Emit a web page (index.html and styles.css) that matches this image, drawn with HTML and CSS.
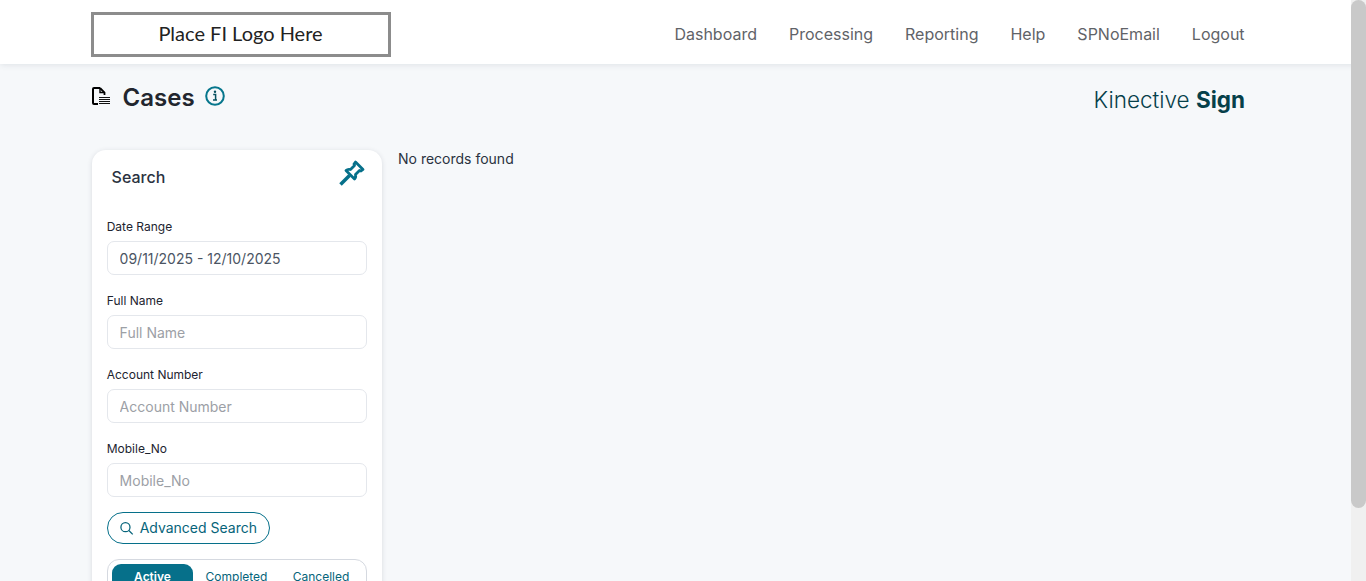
FILE: index.html
```html
<!DOCTYPE html>
<html lang="en">
<head>
<meta charset="utf-8">
<title>Cases</title>
<link rel="stylesheet" href="styles.css">
</head>
<body>
<div class="scrollbar"><div class="scrollbar-thumb"></div></div>
<header class="topbar">
  <div class="logo">Place FI Logo Here</div>
  <nav class="nav">
    <a>Dashboard</a>
    <a>Processing</a>
    <a>Reporting</a>
    <a>Help</a>
    <a>SPNoEmail</a>
    <a>Logout</a>
  </nav>
</header>
<main class="page">
  <div class="title-row">
    <div class="title-left">
      <svg class="doc-icon" width="19" height="19" viewBox="0 0 19 19" fill="none">
        <path d="M9 1H3C2.400 1 2 1.400 2 2V16C2 16.600 2.400 17 3 17H7" stroke="#000" stroke-width="2"/>
        <path d="M9 1L13.500 5.500V8" stroke="#000" stroke-width="1.800"/>
        <path d="M9 1V5.500H13.500" stroke="#000" stroke-width="1.400"/>
        <path d="M8 10.500H19M8 12.500H19M8 14.500H19M8 16.500H19" stroke="#111" stroke-width="1"/>
      </svg>
      <h1 class="title">Cases</h1>
      <svg class="info-icon" width="20" height="20" viewBox="0 0 20 20" fill="none">
        <circle cx="10" cy="10" r="8.800" stroke="#06768c" stroke-width="2"/>
        <circle cx="10" cy="5.800" r="1.200" fill="#06505f"/>
        <path d="M8.200 8.600H10.600V14H12M8 14H12" stroke="#06505f" stroke-width="1.500"/>
      </svg>
    </div>
    <div class="brand">Kinective <b>Sign</b></div>
  </div>
  <div class="content">
    <aside class="card">
      <div class="card-head">
        <span class="card-title">Search</span>
        <svg class="pin" width="26" height="26" viewBox="0 0 26 26" fill="none">
          <path d="M16.500 2L24 9.500L22 11L20.500 10.500L16.500 14.500C17 16.500 16.500 18 15.500 19L7 10.500C8 9.500 9.500 9 11.500 9.500L15.500 5.500L15 4Z" stroke="#06708a" stroke-width="2.800" stroke-linejoin="round"/>
          <path d="M10.500 15.500L1.500 24.500" stroke="#06708a" stroke-width="3.500"/>
        </svg>
      </div>
      <label class="field">
        <span class="field-label">Date Range</span>
        <input class="field-input" value="09/11/2025 - 12/10/2025">
      </label>
      <label class="field">
        <span class="field-label">Full Name</span>
        <input class="field-input" placeholder="Full Name">
      </label>
      <label class="field">
        <span class="field-label">Account Number</span>
        <input class="field-input" placeholder="Account Number">
      </label>
      <label class="field">
        <span class="field-label">Mobile_No</span>
        <input class="field-input" placeholder="Mobile_No">
      </label>
      <button class="adv-btn">
        <svg class="adv-icon" width="15" height="15" viewBox="0 0 15 15" fill="none">
          <circle cx="6" cy="6" r="5" stroke="#06647a" stroke-width="1.400"/>
          <path d="M9.700 9.700L14 14" stroke="#06647a" stroke-width="1.400"/>
        </svg>
        <span class="adv-label">Advanced Search</span>
      </button>
      <div class="tabs">
        <span class="tab tab-active">Active</span>
        <span class="tab">Completed</span>
        <span class="tab">Cancelled</span>
      </div>
    </aside>
    <p class="empty">No records found</p>
  </div>
</main>
</body>
</html>
```
FILE: styles.css
```css
* { box-sizing: border-box; }
body {
  margin: 0;
  background: #f6f8fa;
  font-family: Inter, "Liberation Sans", sans-serif;
  color: #212b36;
}
.scrollbar {
  position: fixed;
  top: 0;
  right: 0;
  bottom: 0;
  width: 15px;
  background: #f0f0f0;
  z-index: 10;
}
.scrollbar-thumb {
  height: 508px;
  background: #c9c9c9;
  border-radius: 8px;
}
.topbar {
  height: 64px;
  background: #fff;
  box-shadow: 0 1px 6px rgba(60, 70, 90, 0.12);
  padding: 12px 121.4px 0 91px;
  display: flex;
  justify-content: space-between;
  align-items: flex-start;
}
.logo {
  width: 300px;
  height: 45px;
  border: 3px solid #8c8c8c;
  display: flex;
  align-items: center;
  justify-content: center;
  padding: 0 1px 3px 0;
  font-family: Lato, sans-serif;
  font-size: 20px;
  color: #222;
}
.nav {
  display: flex;
  gap: 32px;
  padding-top: 13px;
  font-size: 16px;
  line-height: 19px;
  color: #5f6368;
}
.page { padding: 0 121px 0 91px; height: 600px; }
.title-row {
  display: flex;
  justify-content: space-between;
  height: 86px;
}
.title-left {
  display: flex;
  align-items: flex-start;
  padding-top: 22px;
}
.doc-icon { margin-top: 1px; margin-right: 13px; }
.title {
  margin: -3px 10px 0 -0.4px;
  font-size: 24px;
  line-height: 29px;
  font-weight: 600;
  color: #22262e;
}
.brand {
  padding-top: 22px;
  font-size: 22.5px;
  line-height: 28px;
  font-weight: 300;
  color: #06404a;
}
.brand b { font-weight: 700; }
.content { display: flex; align-items: flex-start; }
.card {
  width: 290px;
  margin-left: 1px;
  height: 520px;
  background: #fff;
  border-radius: 14px;
  box-shadow: 0 1px 5px rgba(60, 70, 90, 0.16);
  padding: 0 15px;
}
.card-head {
  height: 69px;
  display: flex;
  justify-content: space-between;
  align-items: flex-start;
  padding: 10px 2px 0 4.6px;
}
.card-title { font-size: 16px; line-height: 19px; font-weight: 500; padding-top: 8px; color: #2a3240; }
.field { display: block; height: 74px; }
.field-label { display: block; font-size: 12px; line-height: 15px; margin: 0 0 7px -0.3px; color: #1d2430; }
.field-input {
  display: block;
  width: 260px;
  height: 34px;
  padding: 0 12px 0 11.6px;
  border: 1px solid #e4e7ec;
  border-radius: 7px;
  background: #fff;
  font: 14px Inter, sans-serif;
  color: #4b5563;
}
.field-input::placeholder { color: #9ca0a6; opacity: 1; }
.adv-btn {
  display: flex;
  align-items: center;
  gap: 6px;
  height: 32px;
  width: 163px;
  margin-top: -3px;
  padding: 0 12px;
  border: 1px solid #06708a;
  border-radius: 16px;
  background: #fff;
  font: 14px Inter, sans-serif;
  white-space: nowrap;
  color: #06647a;
}
.adv-label { margin-top: -1px; }
.tabs {
  display: flex;
  align-items: flex-start;
  margin-top: 15px;
  width: 260px;
  height: 44px;
  padding: 4px;
  border: 1px solid #d5d9e0;
  border-radius: 12px;
}
.tab {
  flex: 1;
  height: 32px;
  padding-left: 2.500px;
  text-align: center;
  font-size: 12px;
  line-height: 26px;
  color: #06647a;
}
.tab-active {
  flex: 0 0 81px;
  padding-left: 0;
  background: #06708a;
  color: #fff;
  font-weight: 600;
  border-radius: 9px;
}
.empty {
  margin: 0 0 0 16px;
  font-size: 14px;
  line-height: 17px;
  color: #2a3240;
}
```
